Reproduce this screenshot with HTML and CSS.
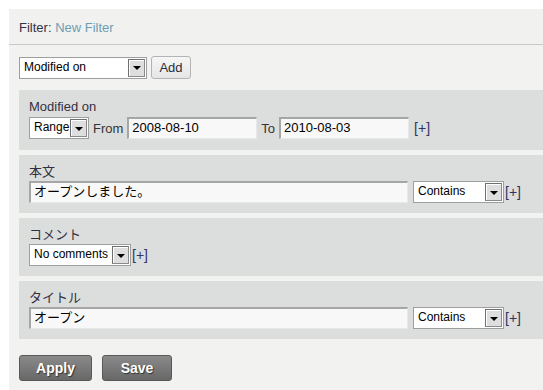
FILE: index.html
```html
<!DOCTYPE html>
<html>
<head>
<meta charset="utf-8">
<link rel="stylesheet" href="styles.css">
</head>
<body>
<div class="page">
  <div class="header"><span class="hlabel">Filter:</span> <span class="hname">New Filter</span></div>
  <div class="content">
    <div class="addrow">
      <div class="sel sel-field"><span class="sel-text">Modified on</span><span class="sel-btn"><i></i></span></div>
      <button class="btn-add">Add</button>
    </div>
    <div class="blocks">
      <div class="block">
        <div class="label">Modified on</div>
        <div class="row">
          <div class="sel sel-range"><span class="sel-text">Range</span><span class="sel-btn"><i></i></span></div>
          <span class="word">From</span>
          <div class="inp inp-date">2008-08-10</div>
          <span class="word">To</span>
          <div class="inp inp-date">2010-08-03</div>
          <span class="plus plus-gap">[+]</span>
        </div>
      </div>
      <div class="block">
        <div class="label">本文</div>
        <div class="row">
          <div class="inp inp-wide">オープンしました。</div>
          <div class="sel sel-contains"><span class="sel-text">Contains</span><span class="sel-btn"><i></i></span></div>
          <span class="plus">[+]</span>
        </div>
      </div>
      <div class="block">
        <div class="label">コメント</div>
        <div class="row">
          <div class="sel sel-comments"><span class="sel-text">No comments</span><span class="sel-btn"><i></i></span></div>
          <span class="plus">[+]</span>
        </div>
      </div>
      <div class="block">
        <div class="label">タイトル</div>
        <div class="row">
          <div class="inp inp-wide">オープン</div>
          <div class="sel sel-contains"><span class="sel-text">Contains</span><span class="sel-btn"><i></i></span></div>
          <span class="plus">[+]</span>
        </div>
      </div>
    </div>
    <div class="actions">
      <button class="btn-dark btn-apply">Apply</button>
      <button class="btn-dark btn-save">Save</button>
    </div>
  </div>
</div>
</body>
</html>
```

FILE: styles.css
```css
* { box-sizing: border-box; }
html, body { margin: 0; padding: 0; background: #ffffff; }
body {
  padding: 9px 0 0 9px;
  font-family: "Liberation Sans", Arial, "Noto Sans CJK JP", sans-serif;
  font-size: 13px;
  color: #333;
}
.page {
  background: #f2f2f0;
  min-height: 381px;
}
.header {
  height: 36px;
  padding: 11px 0 0 10px;
  border-bottom: 1px solid #c9c9c9;
  line-height: 15px;
  background: #f1f1f0;
}
.hlabel { color: #343346; }
.hname { color: #6d9fb3; }
.content { padding: 11px 0 0 10px; }
.addrow { display: flex; align-items: center; gap: 4px; height: 23px; }

.sel {
  display: flex;
  align-items: stretch;
  height: 22px;
  background: #fff;
  border: 1px solid #9e9e9e;
  padding: 1px;
}
.sel-text {
  flex: 1;
  padding-left: 3px;
  font-size: 12px;
  line-height: 17px;
  color: #000;
  white-space: nowrap;
  overflow: hidden;
}
.sel-btn {
  width: 17px;
  background: #dedede;
  border: 1px solid #6f6f6f;
  border-right-color: #8a8a8a;
  border-bottom-color: #8a8a8a;
  box-shadow: inset 1px 1px 0 #ffffff;
  display: flex;
  align-items: center;
  justify-content: center;
}
.sel-btn i {
  display: block;
  width: 0; height: 0;
  border-left: 4px solid transparent;
  border-right: 4px solid transparent;
  border-top: 4px solid #000;
  margin-top: 1px;
}
.sel-field { width: 128px; }
.sel-range { width: 60px; }
.sel-contains { width: 91px; }
.sel-comments { width: 102px; }

.btn-add {
  height: 23px;
  width: 40px;
  margin-left: 0;
  padding: 0;
  font-family: "Liberation Sans", Arial, sans-serif;
  font-size: 13px;
  color: #2a2a3a;
  background: linear-gradient(#f6f6f6, #e6e6e6);
  border: 1px solid #b4b4b4;
  border-radius: 3px;
}

.blocks {
  display: flex;
  flex-direction: column;
  gap: 5px;
  margin-top: 11px;
}
.block {
  background: #dcdedd;
  padding: 9px 0 11px 10px;
}
.block + .block { padding-bottom: 10px; }
.label {
  line-height: 15px;
  height: 15px;
  margin-bottom: 2px;
  color: #33303f;
  font-family: "Liberation Sans", Arial, "Noto Sans CJK JP", sans-serif;
}
.block:first-child .label { margin-bottom: 3px; }
.row { display: flex; align-items: center; height: 22px; }
.word { margin: 0 4px; color: #333; }
.inp {
  height: 22px;
  background: #f8f8f8;
  border-top: 2px solid #a6a6a6;
  border-left: 2px solid #a6a6a6;
  border-right: 1px solid #e8e8e8;
  border-bottom: 1px solid #e8e8e8;
  padding-left: 3px;
  font-size: 13px;
  line-height: 18px;
  color: #000;
  font-family: "Liberation Sans", Arial, "Noto Sans CJK JP", sans-serif;
  white-space: nowrap;
}
.inp-date { width: 130px; }
.inp-wide { width: 379px; margin-right: 5px; }
.plus { color: #2f3466; margin-left: 1px; font-size: 14px; }
.plus-gap { margin-left: 5px; }

.actions {
  display: flex;
  gap: 10px;
  margin-top: 16px;
}
.btn-dark {
  height: 26px;
  padding: 0;
  font-family: "Liberation Sans", Arial, sans-serif;
  font-weight: bold;
  font-size: 14px;
  color: #ffffff;
  text-shadow: 1px 1px 1px #333;
  background: linear-gradient(#8a8a8a, #686868);
  border: 1px solid #585858;
  border-radius: 3px;
}
.btn-apply { width: 73px; }
.btn-save { width: 70px; }
```
